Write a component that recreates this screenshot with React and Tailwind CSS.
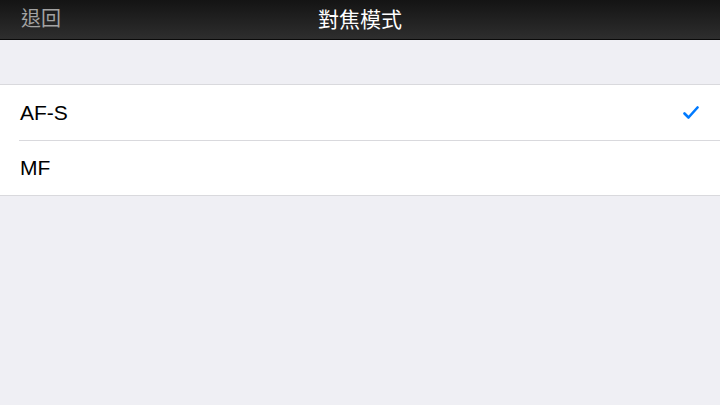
import React from 'react';

const options = ['AF-S', 'MF'];

const App = () => {
  const selected = 'AF-S';

  return (
    <div
      className="w-[720px] h-[405px] bg-[#efeff4] overflow-hidden"
      style={{ fontFamily: '"Liberation Sans", "Noto Sans CJK TC", sans-serif' }}
    >
      {/* Nav bar */}
      <div className="relative h-[40px] flex items-center justify-center bg-gradient-to-b from-[#141414] to-[#2e2e2e] border-b border-[#0a0a0a]">
        <span className="absolute left-[21px] top-[7px] text-[20px] leading-[24px] text-[#a3a3a3]">退回</span>
        <span className="text-[21px] leading-[24px] text-white">對焦模式</span>
      </div>

      {/* Options list */}
      <div className="mt-[44px] bg-white border-t border-b border-[#d9d9dd]">
        {options.map((opt, i) => (
          <div key={opt} className="pl-[19px]">
            <div
              className={`flex items-center justify-between pr-[21px] ${
                i < options.length - 1 ? 'h-[56px] border-b border-[#d9d9dd]' : 'h-[54px]'
              }`}
            >
              <span className="pl-[1px] text-[21px] text-black">{opt}</span>
              {opt === selected && (
                <svg width="16" height="14" viewBox="0 0 16 14" fill="none">
                  <path
                    d="M1.5 7.5 L5.5 11.5 L14.5 1.5"
                    stroke="#007aff"
                    strokeWidth="2.6"
                    strokeLinecap="round"
                    strokeLinejoin="round"
                  />
                </svg>
              )}
            </div>
          </div>
        ))}
      </div>
    </div>
  );
};

export default App;
